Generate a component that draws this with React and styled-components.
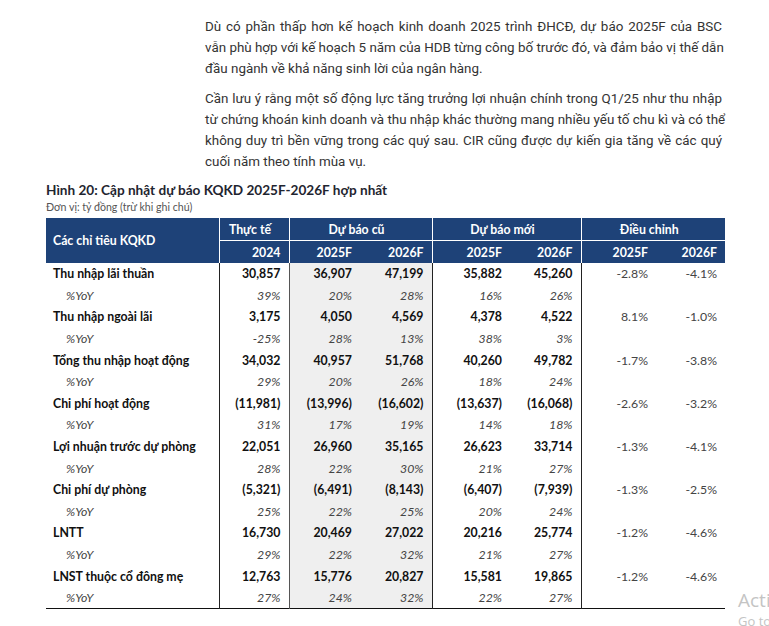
import React from "react";
import styled, { createGlobalStyle } from "styled-components";

const GlobalStyle = createGlobalStyle`
  html, body {
    margin: 0;
    padding: 0;
    background: #ffffff;
    overflow: hidden;
  }
  body {
    width: 769px;
    height: 626px;
    position: relative;
    font-family: "Lato", "Open Sans", sans-serif;
  }
`;

const Page = styled.div`
  padding: 16px 0 0 46px;
`;

const Prose = styled.div`
  margin-left: 159px;
  width: 517px;
  font-family: "Roboto", "Liberation Sans", sans-serif;
  font-size: 13.4px;
  line-height: 21px;
  color: #333;
`;

const Para = styled.div`
  margin-bottom: 9px;
`;

const Line = styled.div`
  text-align: justify;
  text-align-last: ${(p) => (p.$last ? "left" : "justify")};
  white-space: nowrap;
`;

const Title = styled.h3`
  margin: 0;
  font-size: 13.6px;
  font-weight: 700;
  line-height: 18px;
  color: #1f2530;
`;

const Subtitle = styled.div`
  font-size: 10.6px;
  line-height: 13px;
  color: #555;
  margin-top: 2px;
  margin-bottom: 4px;
`;

const Table = styled.table`
  border-collapse: collapse;
  table-layout: fixed;
  width: 679px;
  font-size: 12.3px;
  border-bottom: 1.5px solid #111;
`;

const HeadCell = styled.th`
  background: #1e4278;
  color: #fff;
  font-weight: 700;
  height: 22px;
  padding: 0 ${(p) => (p.$first ? "0 0 7px" : "8px 0 0")};
  text-align: ${(p) => p.$align || "center"};
  border-left: ${(p) => (p.$first || p.$join ? "none" : "1px solid #fff")};
  border-top: ${(p) => (p.$sub ? "1px solid #fff" : "none")};
  white-space: nowrap;
`;

const Row = styled.tr`
  height: 21.6px;
`;

const Label = styled.td`
  padding: 0 0 0 ${(p) => (p.$sub ? "20px" : "7px")};
  font-weight: ${(p) => (p.$sub ? 400 : 700)};
  font-style: ${(p) => (p.$sub ? "italic" : "normal")};
  color: ${(p) => (p.$sub ? "#444" : "#111")};
  white-space: nowrap;
`;

const Num = styled.td`
  padding: 0 8px 0 0;
  text-align: right;
  font-weight: ${(p) => (p.$bold ? 700 : 400)};
  font-style: ${(p) => (p.$italic ? "italic" : "normal")};
  color: ${(p) => (p.$bold ? "#111" : "#444")};
  background: ${(p) => (p.$shade ? "#efefef" : "transparent")};
  border-left: ${(p) => (p.$line ? `1px solid ${p.$line}` : "none")};
  white-space: nowrap;
`;

const Watermark = styled.div`
  position: absolute;
  left: 738px;
  top: 588px;
  font-family: "Open Sans", "DejaVu Sans", sans-serif;
  color: #c4c4c4;
  white-space: nowrap;
  pointer-events: none;
`;

const WmBig = styled.div`
  font-size: 19px;
  line-height: 25px;
`;

const WmSmall = styled.div`
  font-size: 13px;
  line-height: 16px;
`;

const paragraphs = [
  [
    "Dù có phần thấp hơn kế hoạch kinh doanh 2025 trình ĐHCĐ, dự báo 2025F của BSC",
    "vẫn phù hợp với kế hoạch 5 năm của HDB từng công bố trước đó, và đảm bảo vị thế dẫn",
    "đầu ngành về khả năng sinh lời của ngân hàng.",
  ],
  [
    "Cần lưu ý rằng một số động lực tăng trưởng lợi nhuận chính trong Q1/25 như thu nhập",
    "từ chứng khoán kinh doanh và thu nhập khác thường mang nhiều yếu tố chu kì và có thể",
    "không duy trì bền vững trong các quý sau. CIR cũng được dự kiến gia tăng về các quý",
    "cuối năm theo tính mùa vụ.",
  ],
];

const rows = [
  ["Thu nhập lãi thuần", ["30,857", "36,907", "47,199", "35,882", "45,260"], ["-2.8%", "-4.1%"]],
  ["%YoY", ["39%", "20%", "28%", "16%", "26%"]],
  ["Thu nhập ngoài lãi", ["3,175", "4,050", "4,569", "4,378", "4,522"], ["8.1%", "-1.0%"]],
  ["%YoY", ["-25%", "28%", "13%", "38%", "3%"]],
  ["Tổng thu nhập hoạt động", ["34,032", "40,957", "51,768", "40,260", "49,782"], ["-1.7%", "-3.8%"]],
  ["%YoY", ["29%", "20%", "26%", "18%", "24%"]],
  ["Chi phí hoạt động", ["(11,981)", "(13,996)", "(16,602)", "(13,637)", "(16,068)"], ["-2.6%", "-3.2%"]],
  ["%YoY", ["31%", "17%", "19%", "14%", "18%"]],
  ["Lợi nhuận trước dự phòng", ["22,051", "26,960", "35,165", "26,623", "33,714"], ["-1.3%", "-4.1%"]],
  ["%YoY", ["28%", "22%", "30%", "21%", "27%"]],
  ["Chi phí dự phòng", ["(5,321)", "(6,491)", "(8,143)", "(6,407)", "(7,939)"], ["-1.3%", "-2.5%"]],
  ["%YoY", ["25%", "22%", "25%", "20%", "24%"]],
  ["LNTT", ["16,730", "20,469", "27,022", "20,216", "25,774"], ["-1.2%", "-4.6%"]],
  ["%YoY", ["29%", "22%", "32%", "21%", "27%"]],
  ["LNST thuộc cổ đông mẹ", ["12,763", "15,776", "20,827", "15,581", "19,865"], ["-1.2%", "-4.6%"]],
  ["%YoY", ["27%", "24%", "32%", "22%", "27%"]],
];

// border colour to the left of each of the five number columns
const colLines = ["#222", "#555", null, "#222", null];

const widths = [173, 70, 71, 72, 78, 71, 75, 69];

export default function App() {
  return (
    <>
      <GlobalStyle />
      <Page>
        <Prose>
          {paragraphs.map((lines, i) => (
            <Para key={i}>
              {lines.map((l, j) => (
                <Line key={j} $last={j === lines.length - 1}>
                  {l}
                </Line>
              ))}
            </Para>
          ))}
        </Prose>
        <Title>Hình 20: Cập nhật dự báo KQKD 2025F-2026F hợp nhất</Title>
        <Subtitle>Đơn vị: tỷ đồng (trừ khi ghi chú)</Subtitle>
        <Table>
          <colgroup>
            {widths.map((w, i) => (
              <col key={i} style={{ width: w }} />
            ))}
          </colgroup>
          <thead>
            <tr>
              <HeadCell $first $align="left" rowSpan={2}>
                Các chỉ tiêu KQKD
              </HeadCell>
              <HeadCell>Thực tế</HeadCell>
              <HeadCell colSpan={2}>Dự báo cũ</HeadCell>
              <HeadCell colSpan={2}>Dự báo mới</HeadCell>
              <HeadCell colSpan={2}>Điều chỉnh</HeadCell>
            </tr>
            <tr>
              <HeadCell $sub $align="right">2024</HeadCell>
              <HeadCell $sub $align="right">2025F</HeadCell>
              <HeadCell $sub $join $align="right">2026F</HeadCell>
              <HeadCell $sub $align="right">2025F</HeadCell>
              <HeadCell $sub $join $align="right">2026F</HeadCell>
              <HeadCell $sub $align="right">2025F</HeadCell>
              <HeadCell $sub $join $align="right">2026F</HeadCell>
            </tr>
          </thead>
          <tbody>
            {rows.map(([label, vals, adj], i) => {
              const sub = !adj;
              return (
                <Row key={i}>
                  <Label $sub={sub}>{label}</Label>
                  {vals.map((v, j) => (
                    <Num
                      key={j}
                      $bold={!sub}
                      $italic={sub}
                      $shade={j === 1 || j === 2}
                      $line={colLines[j]}
                    >
                      {v}
                    </Num>
                  ))}
                  <Num $line="#222">{adj ? adj[0] : ""}</Num>
                  <Num>{adj ? adj[1] : ""}</Num>
                </Row>
              );
            })}
          </tbody>
        </Table>
      </Page>
      <Watermark>
        <WmBig>Activate Windows</WmBig>
        <WmSmall>Go to Settings to activate Windows.</WmSmall>
      </Watermark>
    </>
  );
}
